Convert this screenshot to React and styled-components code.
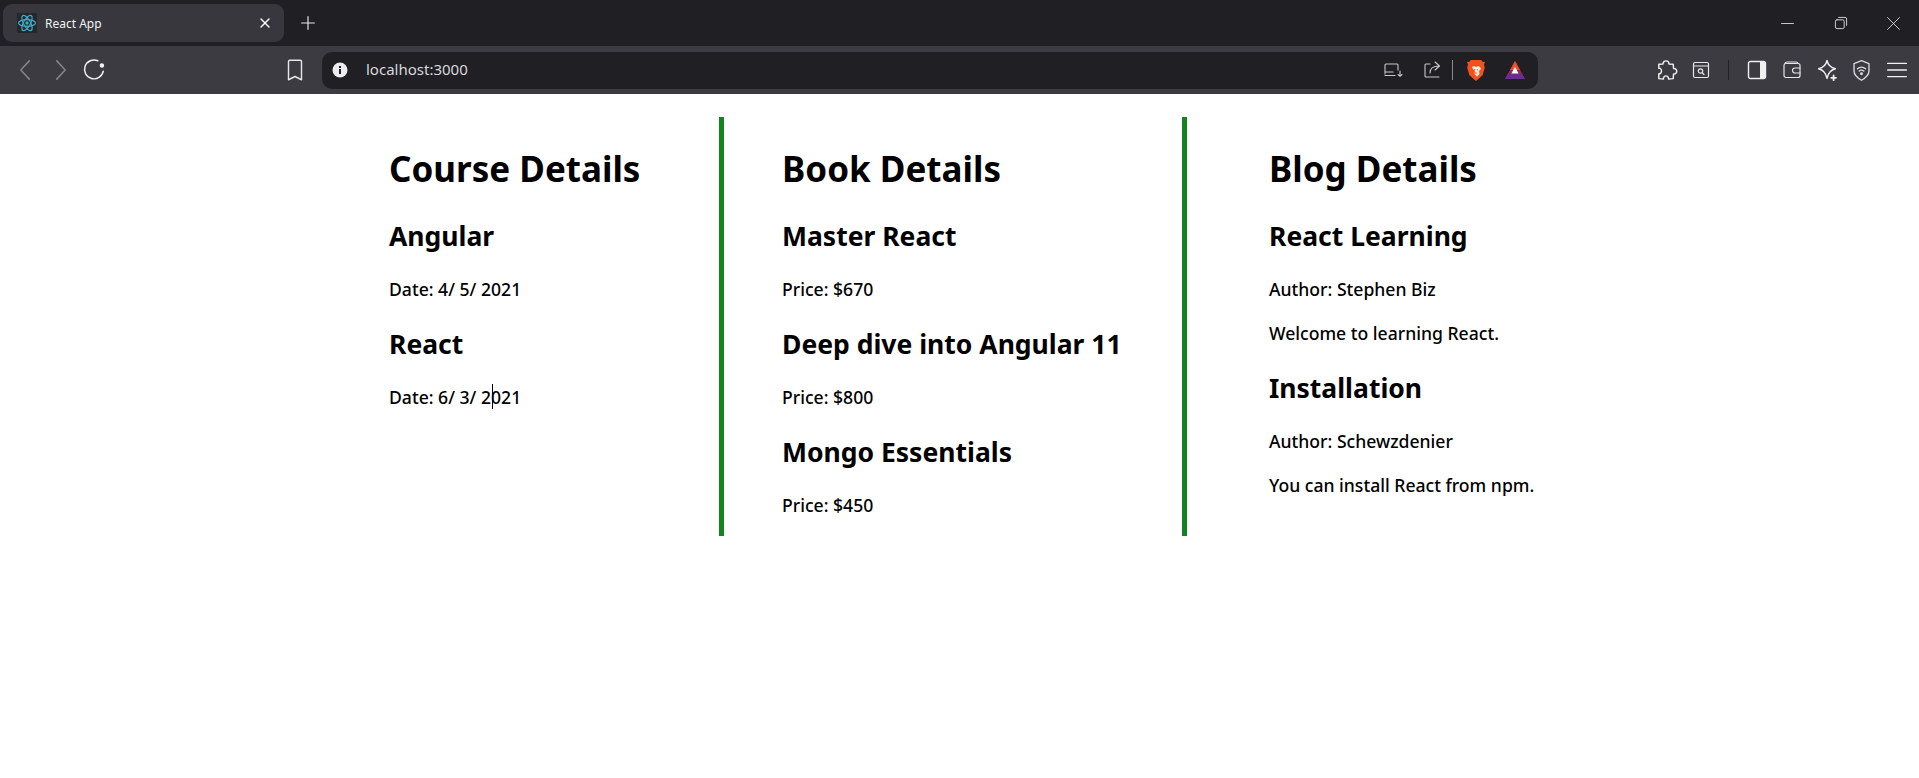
import styled, { createGlobalStyle } from "styled-components"

const GlobalStyle = createGlobalStyle`
    html, body {
        margin: 0;
        padding: 0;
        background: #ffffff;
    }
`;

const TitleBar = styled.div`
    height: 46px;
    background: #1f1f24;
    display: flex;
    align-items: flex-start;
    padding-left: 3px;
    box-sizing: border-box;
    padding-top: 4px;
`;

const Tab = styled.div`
    width: 281px;
    height: 38px;
    background: #37373d;
    border-radius: 9px;
    display: flex;
    align-items: center;
    box-sizing: border-box;
    padding: 0 11px 0 14px;
`;

const TabTitle = styled.span`
    flex: 1;
    margin-left: 8px;
    color: #f2f2f2;
    font: 12px "Noto Sans", sans-serif;
`;

const NewTab = styled.div`
    width: 34px;
    height: 38px;
    margin-left: 7px;
    display: flex;
    align-items: center;
    justify-content: center;
`;

const WindowControls = styled.div`
    margin-left: auto;
    display: flex;
    height: 38px;
    align-items: center;
`;

const WindowButton = styled.div`
    width: ${props => props.$w || 53.5}px;
    display: flex;
    justify-content: center;
`;

const Toolbar = styled.div`
    height: 48px;
    background: #3b3b41;
    display: flex;
    align-items: center;
    padding-left: 9px;
    box-sizing: border-box;
`;

const Slot = styled.div`
    width: ${props => props.$w || 35}px;
    height: 36px;
    flex: none;
    display: flex;
    align-items: center;
    justify-content: center;
`;

const AddressBar = styled.div`
    width: 1216px;
    height: 37px;
    margin-left: 10px;
    background: #1f1f24;
    border-radius: 10px;
    display: flex;
    align-items: center;
    flex: none;
    box-sizing: border-box;
    padding: 0 7px 0 8px;
`;

const Url = styled.span`
    flex: 1;
    margin: 0 0 2px 16px;
    color: #d8d8dc;
    font: 15px "Noto Sans", sans-serif;
`;

const Separator = styled.div`
    width: 1px;
    height: ${props => props.$h}px;
    background: ${props => props.$color};
`;

const Columns = styled.main`
    display: flex;
    align-items: stretch;
    margin-top: 23px;
    padding-left: 389px;
    font-family: "Noto Sans", sans-serif;
    color: #000000;
`;

const Column = styled.section`
    box-sizing: border-box;
    width: ${props => props.$w}px;
    height: 419px;
    padding-left: ${props => props.$pad}px;
    border-left: ${props => props.$divider ? "5px solid #11841f" : "none"};
`;

const Heading = styled.h1`
    margin: 0 0 27px;
    padding-top: 29px;
    font-size: 35px;
    line-height: 46px;
    font-weight: 700;
    white-space: nowrap;
`;

const Title = styled.h2`
    margin: 26px 0 24px;
    font-size: 26.5px;
    line-height: 34px;
    font-weight: 700;
    white-space: nowrap;
`;

const Line = styled.p`
    margin: 0 0 20px;
    font-size: 17.6px;
    line-height: 24px;
    font-weight: 500;
    white-space: nowrap;
`;

const CaretHost = styled.span`
    position: relative;
`;

const Caret = styled.i`
    position: absolute;
    left: 1px;
    top: -1px;
    width: 1px;
    height: 25px;
    background: #000000;
`;

const ReactIcon = () => (
    <svg width="20" height="20" viewBox="0 0 20 20">
        <rect width="20" height="20" rx="1" fill="#24272b" />
        <g fill="none" stroke="#45a8c4" strokeWidth="1.2">
            <ellipse cx="10" cy="10" rx="8.5" ry="3.4" />
            <ellipse cx="10" cy="10" rx="8.5" ry="3.4" transform="rotate(60 10 10)" />
            <ellipse cx="10" cy="10" rx="8.5" ry="3.4" transform="rotate(120 10 10)" />
        </g>
        <circle cx="10" cy="10" r="1.7" fill="#45a8c4" />
    </svg>
);

const Stroke = ({ size = 20, color = "#e6e6e8", width = 1.5, children }) => (
    <svg width={size} height={size} viewBox="0 0 20 20" fill="none" stroke={color} strokeWidth={width} strokeLinecap="round" strokeLinejoin="round">
        {children}
    </svg>
);

const BraveLion = () => (
    <svg width="18" height="22" viewBox="0 0 18 22">
        <path d="M4 1h10l2 2 2 -.2-1 3 .8 3-2.2 7.500-6.600 5.700-6.600-5.700-2.200-7.500.8-3-1-3 2 .2z" fill="#f2501c" />
        <path d="M5 8l2-1 2 1 2-1 2 1 1 2-2 2 .5 3-2.500 2.500-2.500-2.500.5-3-2-2z" fill="#ffe9df" />
        <path d="M7 10.500l1 .5M11 10.500l-1 .5M8 14h2" stroke="#f2501c" strokeWidth="1" />
    </svg>
);

const BatIcon = () => (
    <svg width="22" height="22" viewBox="0 0 22 22">
        <path d="M11 2L21 20H1z" fill="#9c2a56" />
        <path d="M11 2L16 11H6z" fill="#e8502c" />
        <path d="M4.500 14H17.500L21 20H1z" fill="#6a2c91" />
        <path d="M11 8l3.600 6.500H7.400z" fill="#ffffff" />
    </svg>
);

const App = () => (
    <>
        <GlobalStyle />
        <TitleBar>
            <Tab>
                <ReactIcon />
                <TabTitle>React App</TabTitle>
                <Stroke size={16} color="#ffffff" width={1.8}><path d="M5 5l10 10M15 5L5 15" /></Stroke>
            </Tab>
            <NewTab>
                <Stroke size={18} color="#e8e8e8" width={1.3}><path d="M10 3v14M3 10h14" /></Stroke>
            </NewTab>
            <WindowControls>
                <WindowButton><Stroke size={17} width={1}><path d="M3 10h14" /></Stroke></WindowButton>
                <WindowButton><Stroke size={16} width={1.1}><rect x="3" y="6" width="11" height="11" rx="2" /><path d="M7 3h8a2 2 0 0 1 2 2v8" /></Stroke></WindowButton>
                <WindowButton $w={51}><Stroke size={17} width={1}><path d="M3 3l14 14M17 3L3 17" /></Stroke></WindowButton>
            </WindowControls>
        </TitleBar>
        <Toolbar>
            <Slot $w={34}><Stroke size={26} color="#83838a" width={1.2}><path d="M12.500 3L6 10l6.500 7" /></Stroke></Slot>
            <Slot $w={34}><Stroke size={26} color="#83838a" width={1.2}><path d="M7.500 3L14 10l-6.500 7" /></Stroke></Slot>
            <Slot $w={34}>
                <Stroke size={27} color="#f2f2f2" width={1.1}>
                    <path d="M16.500 10.500A7 7 0 1 1 12.500 2.800" />
                    <circle cx="15.500" cy="6.300" r="1.100" fill="#f2f2f2" />
                </Stroke>
            </Slot>
            <Slot $w={167} />
            <Slot $w={34}><Stroke size={26} color="#e6e6e8" width={1.1}><path d="M5 3.500a1 1 0 0 1 1-1h8a1 1 0 0 1 1 1V17.500l-5-2.500-5 2.500z" /></Stroke></Slot>
            <AddressBar>
                <Slot $w={20}>
                    <svg width="16" height="16" viewBox="0 0 16 16">
                        <circle cx="8" cy="8" r="7.500" fill="#ececee" />
                        <rect x="7" y="7" width="2" height="5" fill="#1f1f24" />
                        <rect x="7" y="4" width="2" height="2" fill="#1f1f24" />
                    </svg>
                </Slot>
                <Url>localhost:3000</Url>
                <Slot $w={38}>
                    <Stroke size={20} color="#c9c9cc" width={1.1}>
                        <path d="M2 14V5a1 1 0 0 1 1-1h11a1 1 0 0 1 1 1v5M2 15.500h10M17 11v5M15 14.500l2 1.800 2-1.800M2 12h8" />
                    </Stroke>
                </Slot>
                <Slot $w={40}>
                    <Stroke size={20} color="#c9c9cc" width={1.1}>
                        <path d="M8 4H4a1 1 0 0 0-1 1v11a1 1 0 0 0 1 1h13M8 13c0-5 3-7 9-7M13 2l4.500 4-4.500 4" />
                    </Stroke>
                </Slot>
                <Slot $w={1}><Separator $h={20} $color="#8a8a8e" /></Slot>
                <Slot $w={46}><BraveLion /></Slot>
                <Slot $w={32}><BatIcon /></Slot>
            </AddressBar>
            <Slot $w={110} />
            <Slot>
                <Stroke size={24} color="#f0f0f0" width={1.2}>
                    <path d="M7.500 5c0-3.500 5-3.500 5 0l3.500.2.300 3.500c3.500-.4 3.500 5 0 4.600l-.3 3.900-3.900.3c.4-3.500-4.600-3.500-4.200 0l-3.900-.3V13c3 .8 3-5.200 0-4.400V5.200z" />
                </Stroke>
            </Slot>
            <Slot>
                <Stroke size={20} color="#e6e6e8" width={1.2}>
                    <rect x="2.500" y="2.500" width="15" height="15" rx="1.500" />
                    <path d="M2.500 6h15" />
                    <circle cx="9.500" cy="11" r="2.200" />
                    <path d="M11.500 13l1.500 1.500" />
                </Stroke>
            </Slot>
            <Slot $w={21}><Separator $h={20} $color="#222226" /></Slot>
            <Slot>
                <svg width="20" height="20" viewBox="0 0 20 20">
                    <rect x="1.500" y="1.500" width="17" height="17" rx="2" fill="none" stroke="#f0f0f0" strokeWidth="1.400" />
                    <path d="M13 2h4a1 1 0 0 1 1 1v14a1 1 0 0 1-1 1h-4z" fill="#f0f0f0" />
                </svg>
            </Slot>
            <Slot>
                <Stroke size={20} color="#e6e6e8" width={1.2}>
                    <rect x="2" y="3.500" width="16" height="14" rx="2" />
                    <path d="M3 3.500c0-1 1-1.500 2-1.500h9a2 2 0 0 1 2 1.500M18 8h-5a2.500 2.500 0 0 0 0 5h5" />
                </Stroke>
            </Slot>
            <Slot>
                <Stroke size={24} color="#f0f0f0" width={1.2}>
                    <path d="M10 2c.8 4 2.500 6 7 7-4 1-6 3-7 8-1-5-3-7-7-8 4.500-1 6.200-3 7-7z" />
                    <path d="M15.500 14.500v4M13.500 16.500h4" strokeWidth="1.500" />
                </Stroke>
            </Slot>
            <Slot>
                <Stroke size={23} color="#d8d8da" width={1.2}>
                    <path d="M10 1.500l6.500 2.500v6.500c0 3.500-3 6-6.500 8-3.500-2-6.500-4.500-6.500-8V4z" />
                    <path d="M6.500 8.500c2-1.700 5-1.700 7 0M8 10.500c1.200-1 2.800-1 4 0" />
                    <circle cx="10" cy="12.800" r=".7" fill="#d8d8da" />
                </Stroke>
            </Slot>
            <Slot>
                <Stroke size={22} color="#f0f0f0" width={1.2}><path d="M1.500 4h17M1.500 10h17M1.500 16h17" /></Stroke>
            </Slot>
        </Toolbar>
        <Columns>
            <Column $w={330} $pad={0}>
                <Heading>Course Details</Heading>
                <Title>Angular</Title>
                <Line>Date: 4/ 5/ 2021</Line>
                <Title>React</Title>
                <Line>Date: 6/ 3/ 2<CaretHost><Caret /></CaretHost>021</Line>
            </Column>
            <Column $w={463} $pad={58} $divider>
                <Heading>Book Details</Heading>
                <Title>Master React</Title>
                <Line>Price: $670</Line>
                <Title>Deep dive into Angular 11</Title>
                <Line>Price: $800</Line>
                <Title>Mongo Essentials</Title>
                <Line>Price: $450</Line>
            </Column>
            <Column $w={400} $pad={82} $divider>
                <Heading>Blog Details</Heading>
                <Title>React Learning</Title>
                <Line>Author: Stephen Biz</Line>
                <Line>Welcome to learning React.</Line>
                <Title>Installation</Title>
                <Line>Author: Schewzdenier</Line>
                <Line>You can install React from npm.</Line>
            </Column>
        </Columns>
    </>
);

export default App
